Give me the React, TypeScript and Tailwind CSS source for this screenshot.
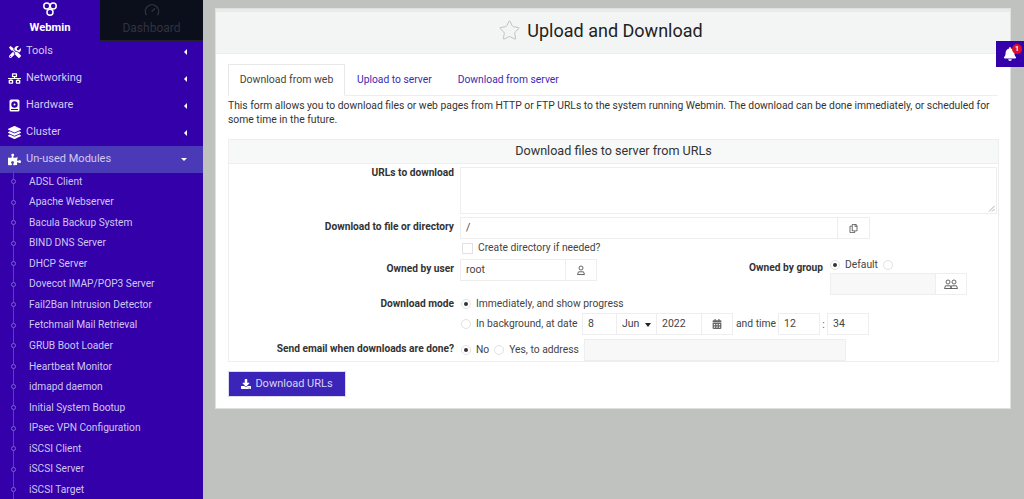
import React from "react";
import { Gauge, Star } from "lucide-react";
import { FaTools, FaNetworkWired, FaLayerGroup, FaPuzzlePiece, FaDownload, FaBell, FaRegCopy, FaCalendarAlt } from "react-icons/fa";

function HddIcon() {
  return (
    <svg width="13" height="13" viewBox="0 0 13 13" className="shrink-0">
      <rect x="1.500" y="0.500" width="10" height="12" rx="1.500" fill="white" />
      <circle cx="6.500" cy="5.500" r="3.200" fill="#3300aa" />
      <circle cx="6.500" cy="5.500" r="1" fill="white" />
      <rect x="3" y="10" width="7" height="1" fill="#3300aa" />
    </svg>
  );
}
function PersonIcon({ x = 0 }: { x?: number }) {
  return (
    <g transform={`translate(${x} 0)`} fill="none" stroke="#555" strokeWidth="0.900">
      <circle cx="5" cy="3" r="2" />
      <path d="M1.500 9.500 2.500 6.800h5l1 2.700z" />
    </g>
  );
}

const top = [
  { n: "Tools", i: <FaTools size={12} className="text-white shrink-0" /> },
  { n: "Networking", i: <FaNetworkWired size={13} className="text-white shrink-0" /> },
  { n: "Hardware", i: <HddIcon /> },
  { n: "Cluster", i: <FaLayerGroup size={13} className="text-white shrink-0" /> },
];
const subs = ["ADSL Client","Apache Webserver","Bacula Backup System","BIND DNS Server","DHCP Server","Dovecot IMAP/POP3 Server","Fail2Ban Intrusion Detector","Fetchmail Mail Retrieval","GRUB Boot Loader","Heartbeat Monitor","idmapd daemon","Initial System Bootup","IPsec VPN Configuration","iSCSI Client","iSCSI Server","iSCSI Target"];

function Radio({ on }: { on?: boolean }) {
  return (
    <span className="w-[10px] h-[10px] rounded-full border border-[#e2e2e2] bg-white flex items-center justify-center shrink-0">
      {on && <span className="w-[4px] h-[4px] rounded-full bg-[#333]" />}
    </span>
  );
}
function Box({ className, children }: { className: string; children?: React.ReactNode }) {
  return <div className={"h-[22px] border border-[#eeeeee] flex items-center shrink-0 text-[10.5px] text-[#444] " + className}>{children}</div>;
}
function Label({ children, className = "" }: { children: React.ReactNode; className?: string }) {
  return <div className={"w-[231px] pr-[6px] text-right font-bold text-[10.2px] text-[#333] shrink-0 " + className}>{children}</div>;
}

export default function App() {
  return (
    <div className="w-[1024px] h-[499px] overflow-hidden flex bg-[#c0c2c0] relative" style={{ fontFamily: "Roboto, sans-serif" }}>
      <aside className="w-[203px] h-full bg-[#3300aa] shrink-0 overflow-hidden">
        <div className="flex h-[41px] relative z-10">
          <div className="w-[100px] flex flex-col items-center pt-[1px] text-white">
            <svg width="16" height="16" viewBox="0 0 16 16" fill="none" stroke="white" strokeWidth="1.500">
              <circle cx="4.800" cy="5" r="3" />
              <circle cx="11.200" cy="5" r="3" />
              <circle cx="8" cy="11.200" r="3" />
            </svg>
            <span className="font-bold text-[11.2px] leading-[14px] mt-[4px]">Webmin</span>
          </div>
          <div className="w-[103px] bg-[#0b0f1c] flex flex-col items-center pt-[2px] text-[#30333c] border-b border-[#20222c]">
            <Gauge size={16} />
            <span className="text-[12px] leading-[14px] mt-[3px]">Dashboard</span>
          </div>
        </div>
        <nav className="text-[#d3c9f3] text-[11px] -mt-[3px]">
          {top.map(({ n, i }) => (
            <div key={n} className="h-[27px] flex items-center pl-[8px] pr-[16px]">
              <span className="w-[13px] flex justify-center shrink-0">{i}</span>
              <span className="ml-[5px] flex-1">{n}</span>
              <span className="border-y-[3px] border-y-transparent border-r-[3px] border-r-white" />
            </div>
          ))}
          <div className="h-[27px] flex items-center pl-[8px] pr-[16px] bg-[#4a3ab8]">
            <FaPuzzlePiece size={13} className="text-white shrink-0" />
            <span className="ml-[5px] flex-1">Un-used Modules</span>
            <span className="border-x-[3px] border-x-transparent border-t-[3px] border-t-white" />
          </div>
          <ul className="relative border-l border-[#5a3fc4] ml-[13px] -mt-[2px]">
            {subs.map((s) => (
              <li key={s} className="h-[20.55px] flex items-center pl-[15px] text-[10.2px] text-[#cfc6f2] relative">
                <span className="absolute left-[-3px] top-[8px] w-[5px] h-[5px] rounded-full border border-[#7a62d6] bg-[#3300aa]" />
                {s}
              </li>
            ))}
          </ul>
        </nav>
      </aside>

      <main className="flex-1 pl-[12px] pt-[8px]">
        <section className="w-[796px] h-[401px] bg-white border border-[#dfe1e0]">
          <header className="h-[45px] bg-[#f3f5f5] flex items-center justify-center border-b border-[#eeeeee] border-t-[3px] border-t-[#e9ebea] pr-[25px] pb-[4px]">
            <Star size={23} strokeWidth={1} className="text-[#bdbdbd] mr-[6px]" />
            <h1 className="text-[18px] text-[#222]">Upload and Download</h1>
          </header>

          <div className="px-[12px]">
            <div className="flex h-[32px] mt-[10px] border-b border-[#eeeeee] text-[10.3px]">
              <div className="w-[117px] h-[32px] border border-[#e8e8e8] border-b-white bg-white flex items-center justify-center text-[#444] text-[10.5px]">Download from web</div>
              <div className="ml-[12px] h-full flex items-center text-[#3b2bb5]">Upload to server</div>
              <div className="ml-[26px] h-full flex items-center text-[#3b2bb5]">Download from server</div>
            </div>
            <p className="text-[10.33px] leading-[14px] text-[#333] mt-[3px]">This form allows you to download files or web pages from HTTP or FTP URLs to the system running Webmin. The download can be done immediately, or scheduled for some time in the future.</p>

            <div className="mt-[12px] w-[771px] h-[223px] border border-[#eeeeee]">
              <div className="h-[24px] bg-[#f7f8f8] border-b border-[#eeeeee] flex items-center justify-center text-[12.6px] text-[#333]">Download files to server from URLs</div>

              <div className="flex mt-[3px] h-[47px]">
                <Label className="-mt-[2px]">URLs to download</Label>
                <div className="w-[537px] h-[47px] border border-[#eeeeee] relative">
                  <svg className="absolute right-[1px] bottom-[1px]" width="7" height="7" viewBox="0 0 7 7" stroke="#999" strokeWidth="0.800"><path d="M1 6.500 6.500 1M4 6.500 6.500 4" /></svg>
                </div>
              </div>
              <div className="flex items-center mt-[3px]">
                <Label className="relative top-[-1px]">Download to file or directory</Label>
                <Box className="w-[378px] pl-[5px]">/</Box>
                <Box className="w-[32px] border-l-0 justify-center"><FaRegCopy size={9} className="text-[#555]" /></Box>
              </div>
              <div className="flex items-center h-[18px] text-[10.3px] text-[#444]">
                <div className="w-[233px] shrink-0" />
                <span className="w-[11px] h-[11px] border border-[#e2e2e2] mr-[5px]" />
                Create directory if needed?
              </div>
              <div className="flex h-[35px] mt-[2px]">
                <Label className="pt-[2px]">Owned by user</Label>
                <Box className="w-[106px] pl-[5px]">root</Box>
                <Box className="w-[31px] border-l-0 justify-center">
                  <svg width="10" height="10" viewBox="0 0 10 10"><PersonIcon /></svg>
                </Box>
                <div className="w-[233px] shrink-0 pt-[1px] pr-[7px] text-right font-bold text-[10.2px] text-[#333]">Owned by group</div>
                <div className="shrink-0">
                  <div className="flex items-center text-[10.3px] text-[#444] h-[14px] -mt-[1px]">
                    <Radio on /><span className="ml-[5px] mr-[5px]">Default</span><Radio />
                  </div>
                  <div className="flex mt-[1px]">
                    <Box className="w-[106px] bg-[#f8f8f8]" />
                    <Box className="w-[31px] border-l-0 justify-center">
                      <svg width="14" height="10" viewBox="0 0 14 10"><PersonIcon x={-1} /><PersonIcon x={5} /></svg>
                    </Box>
                  </div>
                </div>
              </div>

              <div className="flex items-center h-[19px]">
                <Label>Download mode</Label>
                <span className="ml-[1px]"><Radio on /></span><span className="ml-[5px] text-[10.3px] text-[#444]">Immediately, and show progress</span>
              </div>
              <div className="flex items-center h-[22px]">
                <div className="w-[232px] shrink-0" />
                <Radio /><span className="ml-[5px] text-[10.3px] text-[#444] w-[106px] shrink-0">In background, at date</span>
                <Box className="w-[35px] pl-[5px]">8</Box>
                <Box className="w-[40px] border-l-0 pl-[5px] relative">Jun<span className="absolute right-[5px] top-[9px] border-x-[3px] border-x-transparent border-t-[4px] border-t-[#222]" /></Box>
                <Box className="w-[45px] border-l-0 pl-[5px]">2022</Box>
                <Box className="w-[31px] border-l-0 justify-center"><FaCalendarAlt size={10} className="text-[#666]" /></Box>
                <span className="ml-[3px] w-[42px] shrink-0 text-[10.3px] text-[#444]">and time</span>
                <Box className="w-[42px] pl-[5px]">12</Box>
                <span className="w-[7px] text-center text-[10px] text-[#555]">:</span>
                <Box className="w-[42px] pl-[5px]">34</Box>
              </div>
              <div className="flex items-center h-[22px] mt-[4px]">
                <Label className="relative top-[-1px]">Send email when downloads are done?</Label>
                <span className="ml-[1px]"><Radio on /></span><span className="ml-[5px] text-[10.3px] text-[#444]">No</span>
                <span className="ml-[5px]"><Radio /></span><span className="ml-[5px] text-[10.3px] text-[#444] w-[75px] shrink-0">Yes, to address</span>
                <Box className="w-[262px] bg-[#f8f8f8]" />
              </div>
            </div>

            <button className="mt-[9px] w-[118px] h-[26px] bg-[#3a25b8] border border-[#dcd8f0] text-[#d9d3f5] text-[11px] flex items-center justify-center">
              <FaDownload size={10} className="text-white mr-[4px]" />Download URLs
            </button>
          </div>
        </section>
      </main>

      <div className="absolute right-0 top-[41px] w-[28px] h-[26px] bg-[#3300aa] flex items-center justify-center">
        <FaBell size={14} className="text-white" />
        <span className="absolute right-[2px] top-[3px] w-[10px] h-[10px] rounded-full bg-[#dd1122] text-white text-[7px] leading-[10px] text-center font-bold">1</span>
      </div>
    </div>
  );
}
